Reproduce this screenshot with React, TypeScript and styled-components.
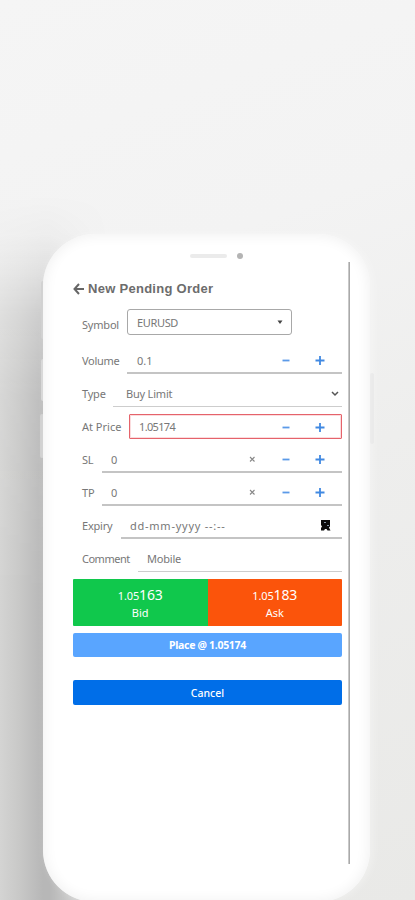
import React from "react";
import styled, { createGlobalStyle, css } from "styled-components";

const Global = createGlobalStyle`
  * { box-sizing: border-box; }
  body { margin: 0; overflow: hidden; }
`;

const Stage = styled.main`
  width: 415px;
  height: 900px;
  padding: 234px 0 0 43px;
  overflow: hidden;
  position: relative;
  background: linear-gradient(160deg, #f5f5f5 0%, #f3f3f3 30%, #eeeeed 55%, #e9e9e7 100%);
  font-family: "Noto Sans", sans-serif;
  color: #777;
`;

const Shade = styled.div`
  position: absolute;
  left: 0;
  top: 195px;
  width: 110px;
  height: 705px;
  background: linear-gradient(90deg, #d4d4d3 0, #c8c8c7 20px, #b7b7b7 43px);
  mask-image: linear-gradient(180deg, transparent 0, rgba(0, 0, 0, 0.08) 38px, rgba(0, 0, 0, 0.3) 75px, rgba(0, 0, 0, 0.65) 120px, rgba(0, 0, 0, 0.9) 200px, #000 400px),
    linear-gradient(90deg, #000 50px, rgba(0, 0, 0, 0.5) 75px, transparent 110px);
  mask-composite: intersect;
`;

const SideKey = styled.div<{ $x: number; $y: number; $h: number; $bg: string }>`
  position: absolute;
  left: ${(p) => p.$x}px;
  top: ${(p) => p.$y}px;
  width: 4px;
  height: ${(p) => p.$h}px;
  border-radius: 2px;
  background: ${(p) => p.$bg};
`;

const Phone = styled.section`
  position: relative;
  width: 327px;
  height: 668px;
  border-radius: 52px;
  padding: 0 20px 0 30px;
  background: #fff;
  box-shadow: inset 0 0 14px 1px #f0f0f0, 3px 0 8px rgba(255, 255, 255, 0.35);
  display: flex;
`;

const Screen = styled.div`
  width: 269px;
  flex: none;
`;

const Edge = styled.div`
  width: 2px;
  height: 602px;
  margin: 28px 0 0 6px;
  background: linear-gradient(90deg, #c9c9c9 50%, #a9a9a9 50%);
`;

const Speaker = styled.div`
  display: flex;
  align-items: center;
  gap: 10px;
  height: 44px;
  padding-left: 117px;
  span { width: 37px; height: 4px; border-radius: 2px; background: #ebebeb; }
  i { width: 6px; height: 6px; border-radius: 50%; background: #b4b4b4; }
`;

const Title = styled.h1`
  margin: 0;
  height: 21px;
  display: flex;
  align-items: center;
  gap: 4px;
  color: #6c6c6c;
  font: bold 13px/21px "Liberation Sans", sans-serif;
  letter-spacing: 0.28px;
  white-space: nowrap;
`;

const Row = styled.div<{ $h?: number }>`
  display: flex;
  align-items: flex-end;
  height: ${(p) => p.$h ?? 33}px;
  padding-left: 9px;
  font-size: 11px;
`;

const Label = styled.label<{ $w: number; $ls?: number; $drop?: boolean }>`
  width: ${(p) => p.$w}px;
  flex: none;
  line-height: ${(p) => (p.$drop ? 20 : 26)}px;
  white-space: nowrap;
  letter-spacing: ${(p) => p.$ls ?? 0}px;
`;

const kinds = {
  line: css`
    border-bottom: 2px solid #c4c4c4;
  `,
  faint: css`
    border-bottom: 1px solid #cdcdcd;
  `,
  box: css`
    flex: 0 0 165px;
    border: 1.5px solid #a8a8a8;
    border-radius: 3px;
  `,
  error: css`
    height: 25px;
    margin-bottom: 1px;
    border: 1px solid #e5636b;
    border-radius: 1px;
    box-shadow: inset 0 0 0 1px #fbdcde;
  `,
};

const Field = styled.div<{ $kind?: keyof typeof kinds; $pad?: number; $ls?: number }>`
  flex: 1;
  height: 26px;
  padding-left: ${(p) => p.$pad ?? 9}px;
  display: flex;
  align-items: center;
  letter-spacing: ${(p) => p.$ls ?? 0}px;
  white-space: pre;
  ${(p) => kinds[p.$kind ?? "line"]}
`;

const Controls = styled.div<{ $inset?: boolean }>`
  margin-left: auto;
  width: ${(p) => (p.$inset ? 95 : 96)}px;
  height: 12px;
  display: grid;
  grid-template-columns: 12px 12px 12px;
  column-gap: 22px;
  svg { display: block; }
`;

const Trailing = styled.svg<{ $r: number }>`
  margin-left: auto;
  margin-right: ${(p) => p.$r}px;
`;

const Quotes = styled.div`
  display: grid;
  grid-template-columns: 1fr 1fr;
  height: 47px;
  margin-top: 7px;
  border-radius: 1px;
  overflow: hidden;
`;

const Quote = styled.div<{ $bg: string }>`
  background: ${(p) => p.$bg};
  color: #fff;
  text-align: center;
  font-size: 11px;
  line-height: 16px;
  padding-top: 6px;
  div { height: 20px; line-height: 20px; letter-spacing: -0.15px; }
  b { font-weight: 400; font-size: 14px; }
`;

const Button = styled.button<{ $bg: string; $top: number; $bold?: boolean; $h: number }>`
  display: block;
  width: 100%;
  height: ${(p) => p.$h}px;
  margin-top: ${(p) => p.$top}px;
  padding: 0;
  border: 0;
  border-radius: 2px;
  background: ${(p) => p.$bg};
  color: #fff;
  font: ${(p) => (p.$bold ? 700 : 500)} 10.5px "Noto Sans", sans-serif;
  letter-spacing: ${(p) => (p.$bold ? -0.3 : 0)}px;
`;

const Stepper = ({ clear, inset }: { clear?: boolean; inset?: boolean }) => (
  <Controls $inset={inset}>
    <svg width="12" height="12" viewBox="0 0 12 12">
      {clear && <path d="M4 4l4.500 4.500M8.500 4l-4.500 4.500" stroke="#888" strokeWidth="1.100" />}
    </svg>
    <svg width="12" height="12" viewBox="0 0 12 12"><path d="M2.500 6.500h7" stroke="#5b9ae8" strokeWidth="1.800" /></svg>
    <svg width="12" height="12" viewBox="0 0 12 12"><path d="M1.500 6.500h9M6 2v9" stroke="#4189e2" strokeWidth="1.800" /></svg>
  </Controls>
);

export default function App() {
  return (
    <Stage>
      <Global />
      <Shade />
      <SideKey $x={41} $y={281} $h={58} $bg="#cfcfcf" />
      <SideKey $x={41} $y={359} $h={42} $bg="#d6d6d6" />
      <SideKey $x={40} $y={414} $h={44} $bg="#d0d0d0" />
      <SideKey $x={370} $y={373} $h={71} $bg="#e6e6e6" />
      <Phone>
        <Screen>
          <Speaker><span /><i /></Speaker>
          <Title>
            <svg width="11" height="12" viewBox="0 0 11 12" fill="none" stroke="#666" strokeWidth="2">
              <path d="M6 1L1.500 6L6 11M2 6h9" />
            </svg>
            New Pending Order
          </Title>
          <Row $h={36}>
            <Label $w={45} $ls={-0.2} $drop>Symbol</Label>
            <Field $kind="box" $ls={-0.35}>
              EURUSD
              <Trailing $r={8} width="6" height="5" viewBox="0 0 6 5"><path d="M.500 .500h5L3 4z" fill="#444" /></Trailing>
            </Field>
          </Row>
          <Row $h={39}><Label $w={45} $ls={-0.3}>Volume</Label><Field $pad={10}>0.1<Stepper /></Field></Row>
          <Row>
            <Label $w={31} $ls={-0.2}>Type</Label>
            <Field $kind="faint" $pad={13} $ls={-0.2}>
              Buy Limit
              <Trailing $r={3} width="8" height="6" viewBox="0 0 8 6" fill="none" stroke="#555" strokeWidth="1.500"><path d="M1 1l3 3l3-3" /></Trailing>
            </Field>
          </Row>
          <Row><Label $w={47}>At Price</Label><Field $kind="error" $ls={-0.65}>1.05174<Stepper inset /></Field></Row>
          <Row><Label $w={20} $ls={-0.2}>SL</Label><Field>0<Stepper clear /></Field></Row>
          <Row><Label $w={20} $ls={-0.2}>TP</Label><Field>0<Stepper clear /></Field></Row>
          <Row>
            <Label $w={39} $ls={-0.2}>Expiry</Label>
            <Field $ls={0.75}>
              dd-mm-yyyy --:--
              <Trailing $r={11} width="11" height="12" viewBox="0 0 11 12">
                <path d="M1 1h9v6.500L9 8.500L10.500 11.500H7.500L6.500 10H5L4 11.500H1V9L2 7.500L1 6z" fill="#0b0b0b" />
                <path d="M4 3.500h2M7 6.500h2" stroke="#8594a5" />
              </Trailing>
            </Field>
          </Row>
          <Row><Label $w={56} $ls={-0.5}>Comment</Label><Field $kind="faint" $ls={-0.2}>Mobile</Field></Row>
          <Quotes>
            <Quote $bg="#10c84c"><div>1.05<b>163</b></div>Bid</Quote>
            <Quote $bg="#fb540b"><div>1.05<b>183</b></div>Ask</Quote>
          </Quotes>
          <Button $bg="#59a5ff" $top={7} $h={24} $bold>Place @ 1.05174</Button>
          <Button $bg="#006ee8" $top={23} $h={25}>Cancel</Button>
        </Screen>
        <Edge />
      </Phone>
    </Stage>
  );
}
